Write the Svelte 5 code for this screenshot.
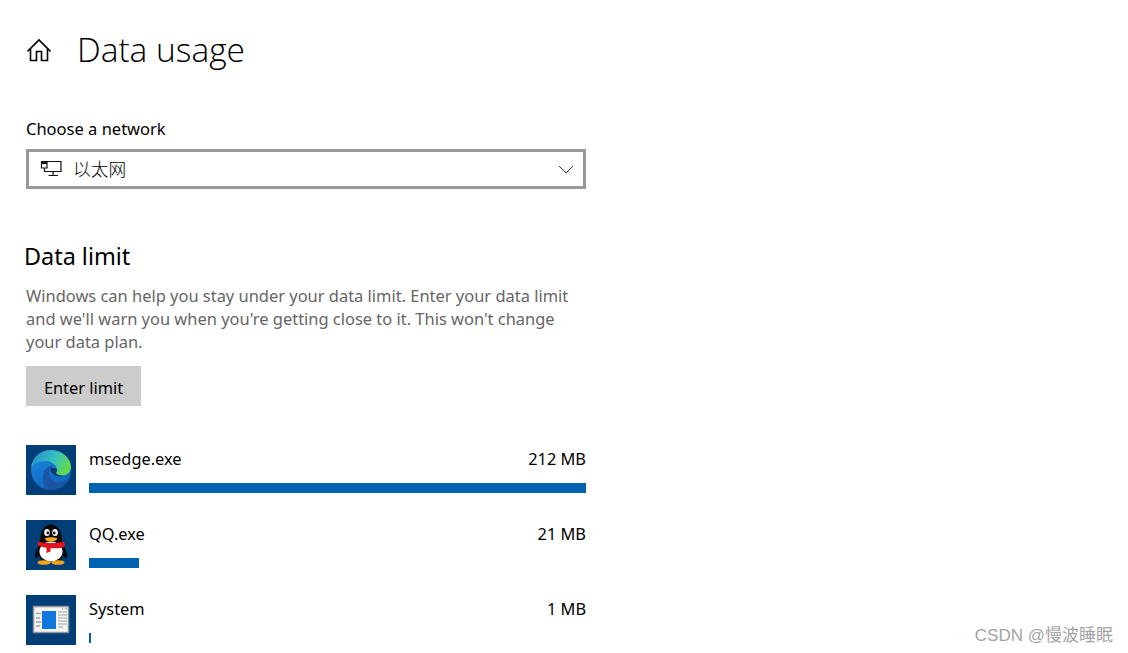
<script>
  const apps = [
    { name: 'msedge.exe', size: '212 MB', width: 497, icon: 'edge' },
    { name: 'QQ.exe', size: '21 MB', width: 50, icon: 'qq' },
    { name: 'System', size: '1 MB', width: 2, icon: 'system' }
  ];
</script>

<main class="page">
  <header class="title-row">
    <svg class="home" viewBox="0 0 24 24" width="24" height="24" fill="none" stroke="#000" stroke-width="1.600">
      <path d="M.5 13.500 12 2l11.500 11.500" />
      <path d="M3.500 11V22.500h6V13.500h5V22.500h6V11" />
    </svg>
    <h1>Data usage</h1>
  </header>

  <label class="field-label" for="net">Choose a network</label>
  <div class="select" id="net">
    <svg class="net" viewBox="0 0 22 18" width="22" height="18" fill="none" stroke="#111" stroke-width="1.200">
      <path d="M1.500 2.500h5.500v6.500H1.500z" />
      <path d="M1.500 3h5.500v2H1.500z" fill="#111" stroke="none" />
      <path d="M7 2.500H21V12.500H4.500V9M13 12.500v3.500M8.500 16.500h9.500" />
    </svg>
    <span class="net-name">以太网</span>
    <svg class="chev" viewBox="0 0 16 9" width="16" height="9" fill="none" stroke="#333" stroke-width="1">
      <path d="M1 1l7 7 7-7" />
    </svg>
  </div>

  <h2>Data limit</h2>
  <p class="desc">Windows can help you stay under your data limit. Enter your data limit and we'll warn you when you're getting close to it. This won't change your data plan.</p>
  <button class="limit"><span>Enter limit</span></button>

  <ul class="apps">
    {#each apps as app}
      <li class="app">
        <div class="tile">
          {#if app.icon === 'edge'}
            <svg viewBox="0 0 50 50" width="50" height="50">
              <defs>
                <linearGradient id="eg" x1="0.050" y1="0.300" x2="0.950" y2="0.650">
                  <stop offset="0" stop-color="#2a93cf" />
                  <stop offset="0.500" stop-color="#34bfc0" />
                  <stop offset="1" stop-color="#62d94e" />
                </linearGradient>
                <linearGradient id="eb" x1="0" y1="0" x2="0.600" y2="1">
                  <stop offset="0" stop-color="#1c8ade" />
                  <stop offset="1" stop-color="#0f66bd" />
                </linearGradient>
              </defs>
              <circle cx="25" cy="25" r="20" fill="url(#eb)" />
              <path d="M21 44.600C28 45.600 38 43 44 33 38 38 31 38 27 35 22.500 31 22 26 25 23 27 22 27 21 26 21 21 21 17 26 17 32 17 38 18 43 21 44.600z" fill="#1a55a6" />
              <path d="M25 23c3-1 6 .5 7 3 1 2 3 4 5.500 4.500-2 1.500-8 1-10.500-1.200C24.500 27 24 25 25 23z" fill="#0c3a70" />
              <path d="M5.200 23C6 13 14 5 25 5c11.500 0 20 8.500 20 17 0 5.500-4.500 8.500-8.500 8.500-3.500 0-5.500-1-6.500-2.500 1.500-1.500 1.500-4 0-6.500C28 18 23.500 16 19 16 12.500 16 7.500 19 5.200 23z" fill="url(#eg)" />
            </svg>
          {:else if app.icon === 'qq'}
            <svg viewBox="0 0 50 50" width="50" height="50">
              <path d="M14 24C10 29 8.500 34 9 38c2 0 4-1.500 5.500-4z" fill="#0a0a0a" />
              <path d="M36 24c4 5 5.500 10 5 14-2 0-4-1.500-5.500-4z" fill="#0a0a0a" />
              <path d="M13.500 24C14 11 18 4.500 25 4.500S36 11 36.500 24c1 6 1 12-2 17h-19c-3-5-3-11-2-17z" fill="#0a0a0a" />
              <ellipse cx="25" cy="31.500" rx="11.500" ry="10" fill="#fff" />
              <ellipse cx="21" cy="12.500" rx="2.800" ry="3.500" fill="#fff" />
              <ellipse cx="29" cy="12.500" rx="2.800" ry="3.500" fill="#fff" />
              <circle cx="21.800" cy="13" r="1.400" fill="#111" />
              <circle cx="28.200" cy="13" r="1.400" fill="#111" />
              <path d="M18.500 18.500c3-1.600 10-1.600 13 0-1.500 2.500-3.500 3-6.500 3s-5-.5-6.500-3z" fill="#f5a81c" />
              <path d="M12 21.500c7 2 19 2 26 0 1 1.500 1 3.500.5 5.200-2.500 1-5.500 1.500-8.500 1.600h-5.500v3.200l-4 1.500v-5.200c-2.500-.2-5-.8-8-1.700-.8-1.500-1-3-.5-4.600z" fill="#e0141c" />
              <ellipse cx="18" cy="42.500" rx="6.500" ry="2.300" fill="#f1a31a" />
              <ellipse cx="32" cy="42.500" rx="6.500" ry="2.300" fill="#f1a31a" />
            </svg>
          {:else}
            <svg viewBox="0 0 50 50" width="50" height="50">
              <rect x="7.500" y="11.500" width="35" height="26" fill="#f3f3f3" stroke="#8f949a" stroke-width="1.500" />
              <rect x="16" y="16" width="14" height="18" fill="#0f78dc" />
              <path d="M10 18.500h5M10 23h4M10 27h5M10 31h4" stroke="#a5a5a5" stroke-width="1.300" />
              <path d="M32 17h9M32 20h9M32 23h9M32 26h9M32 29h9M32 32h5" stroke="#a5a5a5" stroke-width="1.100" />
              <path d="M36 13.500h1M38.500 13.500h1M40 13.500h1" stroke="#a5a5a5" stroke-width="1" />
            </svg>
          {/if}
        </div>
        <div class="info">
          <div class="line">
            <span>{app.name}</span>
            <span>{app.size}</span>
          </div>
          <div class="bar" style:width="{app.width}px"></div>
        </div>
      </li>
    {/each}
  </ul>

  <div class="mark">CSDN @慢波睡眠</div>
</main>

<style>
  :global(body) {
    margin: 0;
    background: #fff;
    overflow: hidden;
  }
  .page {
    position: relative;
    box-sizing: border-box;
    width: 1128px;
    height: 653px;
    overflow: hidden;
    padding: 26px 0 0 26px;
    font-family: "Noto Sans", "Noto Sans CJK SC", sans-serif;
    font-size: 16.350px;
    color: #000;
  }
  .title-row {
    display: flex;
    align-items: center;
    gap: 26px;
    height: 46px;
  }
  .home { flex: none; margin: 2px 0 0 1px; }
  h1 {
    margin: 0;
    font-size: 33.500px;
    font-weight: 300;
    line-height: 46px;
    font-family: "Open Sans", sans-serif;
    white-space: nowrap;
  }
  .field-label {
    display: block;
    margin-top: 45px;
    font-size: 16.500px;
    line-height: 24px;
    height: 32px;
  }
  .select {
    box-sizing: border-box;
    width: 560px;
    height: 40px;
    border: 3px solid #999;
    display: flex;
    align-items: center;
    padding: 0 11px;
  }
  .net { flex: none; margin-top: -3px; }
  .net-name {
    margin: -2px 0 0 11px;
    font-size: 17.700px;
    font-weight: 300;
    font-family: "Noto Sans CJK SC", sans-serif;
  }
  .chev { margin-left: auto; margin-right: -2px; }
  h2 {
    margin: 50px 0 0 -2px;
    font-size: 23.400px;
    font-weight: 400;
    line-height: 34px;
  }
  .desc {
    margin: 11px 0 0;
    width: 560px;
    font-size: 16.450px;
    line-height: 23px;
    color: #666;
  }
  .limit {
    display: block;
    margin-top: 13px;
    width: 115px;
    height: 40px;
    border: 0;
    padding: 4px 0 0;
    background: #ccc;
    font: inherit;
    color: #000;
  }
  .apps {
    list-style: none;
    margin: 39px 0 0;
    padding: 0;
    display: flex;
    flex-direction: column;
    gap: 25px;
  }
  .app {
    display: flex;
    gap: 13px;
    width: 560px;
    height: 50px;
  }
  .tile {
    flex: none;
    width: 50px;
    height: 50px;
    background: #003e78;
  }
  .tile svg { display: block; }
  .info {
    flex: 1;
    display: flex;
    flex-direction: column;
    justify-content: space-between;
    padding-bottom: 2px;
  }
  .line {
    display: flex;
    justify-content: space-between;
    line-height: 28px;
  }
  .bar {
    height: 10px;
    background: #0063b1;
  }
  .mark {
    position: absolute;
    right: 15px;
    bottom: 7px;
    font-size: 17px;
    color: #a3a3a3;
    font-family: "Liberation Sans", "Noto Sans CJK SC", sans-serif;
  }
</style>
